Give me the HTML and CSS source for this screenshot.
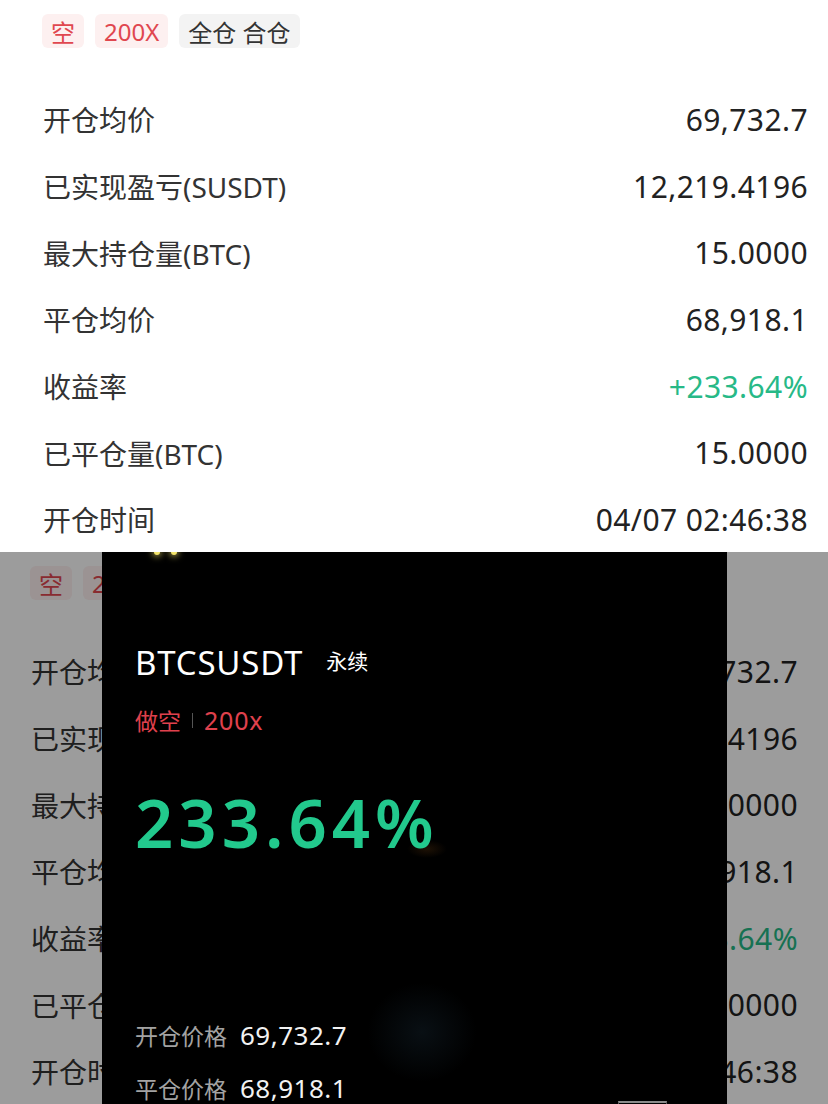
FILE: index.html
```html
<!DOCTYPE html>
<html lang="zh-CN">
<head>
    <meta charset="UTF-8">
    <meta name="viewport" content="width=device-width, initial-scale=1.0">
    <title>BTCSUSDT 仓位详情</title>
    <link rel="stylesheet" href="styles.css">
</head>
<body>
    <div class="sheet">
        <div class="tags">
            <span class="tag tag-red">空</span>
            <span class="tag tag-red">200X</span>
            <span class="tag tag-gray">全仓 合仓</span>
        </div>
        <div class="rows">
            <div class="row"><span class="label">开仓均价</span><span class="value">69,732.7</span></div>
            <div class="row"><span class="label">已实现盈亏(SUSDT)</span><span class="value">12,219.4196</span></div>
            <div class="row"><span class="label">最大持仓量(BTC)</span><span class="value">15.0000</span></div>
            <div class="row"><span class="label">平仓均价</span><span class="value">68,918.1</span></div>
            <div class="row"><span class="label">收益率</span><span class="value up">+233.64%</span></div>
            <div class="row"><span class="label">已平仓量(BTC)</span><span class="value">15.0000</span></div>
            <div class="row"><span class="label">开仓时间</span><span class="value">04/07 02:46:38</span></div>
        </div>
    </div>

    <div class="sheet sheet-dim">
        <div class="tags">
            <span class="tag tag-red">空</span>
            <span class="tag tag-red">200X</span>
            <span class="tag tag-gray">全仓 合仓</span>
        </div>
        <div class="rows">
            <div class="row"><span class="label">开仓均价</span><span class="value">69,732.7</span></div>
            <div class="row"><span class="label">已实现盈亏(SUSDT)</span><span class="value">12,219.4196</span></div>
            <div class="row"><span class="label">最大持仓量(BTC)</span><span class="value">15.0000</span></div>
            <div class="row"><span class="label">平仓均价</span><span class="value">68,918.1</span></div>
            <div class="row"><span class="label">收益率</span><span class="value up">+233.64%</span></div>
            <div class="row"><span class="label">已平仓量(BTC)</span><span class="value">15.0000</span></div>
            <div class="row"><span class="label">开仓时间</span><span class="value">04/07 02:46:38</span></div>
        </div>
        <div class="mask"></div>

        <!-- share card shown over the dimmed page -->
        <div class="share-card">
            <span class="spark spark-1"></span>
            <span class="spark spark-2"></span>
            <span class="glow glow-orange"></span>
            <span class="glow glow-blue"></span>
            <div class="card-title">
                <span class="symbol">BTCSUSDT</span>
                <span class="kind">永续</span>
            </div>
            <div class="card-side">
                <span>做空</span>
                <span class="divider"></span>
                <span class="lever">200x</span>
            </div>
            <div class="card-roi">233.64%</div>
            <div class="card-prices">
                <div class="price"><span class="price-label">开仓价格</span><span class="price-value">69,732.7</span></div>
                <div class="price"><span class="price-label">平仓价格</span><span class="price-value">68,918.1</span></div>
            </div>
            <span class="card-button"></span>
        </div>
    </div>
</body>
</html>
```

FILE: styles.css
```css
body {
    margin: 0;
    padding: 0;
    width: 828px;
    font-family: "Noto Sans", "Noto Sans CJK SC", sans-serif;
    background-color: #fff;
    color: #2b2b2b;
}
.sheet {
    position: relative;
    height: 552px;
    padding: 14px 20px 0 43px;
    box-sizing: border-box;
    background-color: #fff;
    overflow: hidden;
}
.sheet-dim {
    padding-left: 31px;
    padding-right: 30px;
}
.tags {
    display: flex;
    gap: 11px;
    height: 34px;
    margin-left: -1px;
}
.tag {
    display: flex;
    align-items: center;
    padding: 0 9px;
    border-radius: 6px;
    font-size: 24px;
    font-family: "Noto Sans", "Noto Sans CJK SC", sans-serif;
}
.tag-red {
    background-color: #fdf0f0;
    color: #e0474f;
}
.tag-gray {
    background-color: #f3f3f3;
    color: #333;
}
.rows {
    margin-top: 38px;
}
.row {
    display: flex;
    justify-content: space-between;
    align-items: center;
    height: 66.7px;
}
.label {
    font-family: "Noto Sans", "Noto Sans CJK SC", sans-serif;
    font-size: 28px;
    color: #333;
}
.value {
    font-size: 30px;
    color: #222;
    letter-spacing: 0.4px;
}
.value.up {
    color: #27b987;
}
.mask {
    position: absolute;
    top: 0;
    left: 0;
    right: 0;
    bottom: 0;
    background-color: rgba(0, 0, 0, 0.39);
}
.share-card {
    position: absolute;
    top: 0;
    left: 102px;
    width: 625px;
    height: 560px;
    padding: 90px 0 0 33px;
    box-sizing: border-box;
    background-color: #000;
    color: #fff;
    overflow: hidden;
}
.spark {
    position: absolute;
    top: -3px;
    width: 6px;
    height: 6px;
    border-radius: 50%;
    background-color: #f4e56a;
    box-shadow: 0 0 6px 2px rgba(244, 229, 106, 0.6);
}
.spark-1 { left: 52px; }
.spark-2 { left: 69px; }
.glow {
    position: absolute;
    border-radius: 50%;
}
.glow-orange {
    left: 305px;
    top: 288px;
    width: 40px;
    height: 18px;
    background: radial-gradient(ellipse at center, rgba(120, 70, 20, 0.25), rgba(0, 0, 0, 0) 70%);
}
.glow-blue {
    left: 265px;
    top: 430px;
    width: 110px;
    height: 100px;
    background: radial-gradient(ellipse at center, rgba(40, 70, 90, 0.22), rgba(0, 0, 0, 0) 70%);
}
.card-title {
    position: relative;
    display: flex;
    align-items: center;
    gap: 23px;
    height: 40px;
}
.symbol {
    font-size: 33px;
    letter-spacing: 0.8px;
}
.kind {
    font-family: "Noto Sans CJK SC", sans-serif;
    font-size: 21px;
    margin-top: -4px;
}
.card-side {
    position: relative;
    display: flex;
    align-items: center;
    gap: 11px;
    height: 30px;
    margin-top: 23px;
    font-size: 23px;
    color: #e0414d;
}
.lever {
    font-size: 25px;
    letter-spacing: 0.8px;
}
.divider {
    width: 1px;
    height: 15px;
    background-color: #555;
}
.card-roi {
    position: relative;
    height: 70px;
    line-height: 70px;
    margin-top: 52px;
    font-size: 67px;
    font-weight: 600;
    letter-spacing: 5px;
    color: #22c98d;
}
.card-prices {
    position: relative;
    margin-top: 160px;
}
.price {
    display: flex;
    align-items: center;
    gap: 13px;
    height: 36px;
    margin-bottom: 17px;
}
.price-label {
    font-family: "Noto Sans CJK SC", sans-serif;
    font-size: 23px;
    color: #a3a3a3;
}
.price-value {
    font-size: 26px;
    letter-spacing: 0.5px;
    color: #f2f2f2;
}
.card-button {
    position: absolute;
    left: 516px;
    top: 549px;
    width: 47px;
    height: 8px;
    border-top: 2px solid #8a8a8a;
    border-left: 1px solid #555;
    border-right: 1px solid #555;
}
```
